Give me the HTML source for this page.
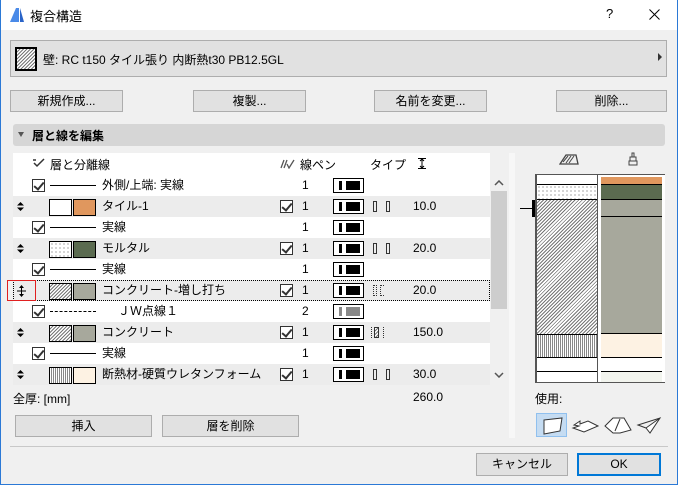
<!DOCTYPE html>
<html><head><meta charset="utf-8">
<style>
*{box-sizing:border-box;margin:0;padding:0}
body{width:678px;height:485px;overflow:hidden;background:#f0f0f0;font-family:"Liberation Sans","Noto Sans CJK JP",sans-serif;font-size:12px;color:#000;position:relative}
.a{position:absolute}
.btn{position:absolute;background:#e1e1e1;border:1px solid #adadad;text-align:center;line-height:20px;font-size:12px}
.row{position:absolute;left:13px;width:477px;height:21px}
.row.l{background:#ececec}
.row.w{background:#fff}
.cb{position:absolute;width:13px;height:13px;border:1px solid #333;background:#fff}
.cb:after{content:"";position:absolute;left:3px;top:0px;width:4px;height:8px;border:solid #333;border-width:0 2px 2px 0;transform:rotate(40deg)}
.t{position:absolute;top:3px;line-height:15px;white-space:nowrap}
.pen{position:absolute;left:320px;top:3px;width:31px;height:15px;border:1.5px solid #000;background:#fff}
.pen i{position:absolute;left:5px;top:2px;width:3px;height:9px;background:#000}
.pen b{position:absolute;left:12px;top:2px;width:14px;height:9px;background:#000}
.sw{position:absolute;top:3px;width:23px;height:17px;border:1px solid #000}
.ln{position:absolute;left:37px;top:10px;width:46px;height:0;border-top:1px solid #000}
.dr{position:absolute;left:4px;top:6px;width:7px;height:9px}
.ty{position:absolute;left:360px;top:5px;width:4px;height:11px;border:1px solid #333}
.hatch{background:repeating-linear-gradient(135deg,#fff 0 1.5px,#777 1.5px 2.5px)}
.dots{background-color:#fff;background-image:radial-gradient(#666 0.6px,transparent 0.8px);background-size:4px 4px}
.zig{background:repeating-linear-gradient(90deg,#fff 0 1px,#888 1px 2px)}
</style></head><body>
<div class="a" style="left:0;top:0;width:1px;height:485px;background:#2b79d6"></div>
<div class="a" style="right:0;top:0;width:1px;height:485px;background:#2b79d6"></div>
<div class="a" style="left:0;bottom:0;width:678px;height:1px;background:#2b79d6"></div>
<div class="a" style="left:1px;top:0;width:676px;height:30px;background:#fff"></div>
<svg class="a" style="left:9px;top:7px" width="16" height="16"><path d="M1 15 L7 1 L10 1 L10 15Z" fill="#4a8ae8"/><path d="M11 1 L15 15 L11 15Z" fill="#2a64c8"/></svg>
<div class="a" style="left:30px;top:6px;font-size:13px">複合構造</div>
<div class="a" style="left:606px;top:6px;font-size:13px">?</div>
<svg class="a" style="left:649px;top:9px" width="11" height="11"><path d="M0.5 0.5 L10.5 10.5 M10.5 0.5 L0.5 10.5" stroke="#000" stroke-width="1"/></svg>
<div class="a" style="left:10px;top:40px;width:657px;height:37px;background:#e1e1e1;border:1px solid #adadad"></div>
<div class="a hatch" style="left:15px;top:47px;width:22px;height:24px;border:2px solid #000"></div>
<div class="a" style="left:43px;top:51px;font-size:12px">壁: RC t150 タイル張り 内断熱t30 PB12.5GL</div>
<div class="a" style="left:658px;top:53px;width:0;height:0;border-left:4px solid #333;border-top:4px solid transparent;border-bottom:4px solid transparent"></div>
<div class="btn" style="left:10px;top:90px;width:113px;height:22px">新規作成...</div>
<div class="btn" style="left:193px;top:90px;width:113px;height:22px">複製...</div>
<div class="btn" style="left:374px;top:90px;width:113px;height:22px">名前を変更...</div>
<div class="btn" style="left:556px;top:90px;width:111px;height:22px">削除...</div>
<div class="a" style="left:13px;top:124px;width:652px;height:22px;background:#d6d6d6;border-radius:3px"></div>
<div class="a" style="left:18px;top:132px;width:0;height:0;border-top:5px solid #555;border-left:3.5px solid transparent;border-right:3.5px solid transparent"></div>
<div class="a" style="left:32px;top:127px;font-weight:bold">層と線を編集</div>
<div class="a" style="left:13px;top:153px;width:477px;height:22px;background:#fff"></div>
<svg class="a" style="left:32px;top:158px" width="14" height="10"><path d="M1 2 L4 2 M2 5 L5 8 L12 1" stroke="#333" stroke-width="1.5" fill="none"/></svg>
<div class="a" style="left:50px;top:156px">層と分離線</div>
<svg class="a" style="left:280px;top:159px" width="16" height="10"><path d="M1 9 L4 1 M4 9 L7 1 M7 5 L9 9 L14 1" stroke="#555" stroke-width="1.3" fill="none"/></svg>
<div class="a" style="left:300px;top:156px">線ペン</div>
<div class="a" style="left:370px;top:156px">タイプ</div>
<svg class="a" style="left:418px;top:158px" width="8" height="11"><path d="M0 0.5 H8 M0 10.5 H8 M4 1 V10 M2 3 L4 1 L6 3 M2 8 L4 10 L6 8" stroke="#000" fill="none"/></svg>
<div class="row w" style="top:175px"><div class="cb" style="left:19px;top:4px"></div><div class="ln"></div><div class="t" style="left:89px">外側/上端: 実線</div><div class="t" style="left:289px">1</div><div class="pen"><i></i><b></b></div></div>
<div class="row l" style="top:196px"><svg class="dr"><path d="M0 3.5 L3.5 0 L7 3.5Z M0 5.5 L3.5 9 L7 5.5Z" fill="#000"/></svg><div class="sw" style="left:36px;background:#fff"></div><div class="sw" style="left:60px;background:#e0975e"></div><div class="t" style="left:89px">タイル-1</div><div class="cb" style="left:267px;top:4px"></div><div class="t" style="left:289px">1</div><div class="pen"><i></i><b></b></div><div class="ty"></div><div class="ty" style="left:373px"></div><div class="t" style="left:400px">10.0</div></div>
<div class="row w" style="top:217px"><div class="cb" style="left:19px;top:4px"></div><div class="ln"></div><div class="t" style="left:89px">実線</div><div class="t" style="left:289px">1</div><div class="pen"><i></i><b></b></div></div>
<div class="row l" style="top:238px"><svg class="dr"><path d="M0 3.5 L3.5 0 L7 3.5Z M0 5.5 L3.5 9 L7 5.5Z" fill="#000"/></svg><div class="sw dots" style="left:36px"></div><div class="sw" style="left:60px;background:#5b6b50"></div><div class="t" style="left:89px">モルタル</div><div class="cb" style="left:267px;top:4px"></div><div class="t" style="left:289px">1</div><div class="pen"><i></i><b></b></div><div class="ty"></div><div class="ty" style="left:373px"></div><div class="t" style="left:400px">20.0</div></div>
<div class="row w" style="top:259px"><div class="cb" style="left:19px;top:4px"></div><div class="ln"></div><div class="t" style="left:89px">実線</div><div class="t" style="left:289px">1</div><div class="pen"><i></i><b></b></div></div>
<div class="row l" style="top:280px;border:1px dotted #000"><svg class="a" style="left:2px;top:3px" width="11" height="14"><path d="M3 4 L5.5 1 L8 4Z M3 10 L5.5 13 L8 10Z" fill="#000"/><path d="M5.5 3 V11 M1 7 H10" stroke="#000"/></svg><div class="sw hatch" style="left:35px;top:2px"></div><div class="sw" style="left:59px;top:2px;background:#a7a89c"></div><div class="t" style="left:88px;top:2px">コンクリート-増し打ち</div><div class="cb" style="left:266px;top:3px"></div><div class="t" style="left:288px;top:2px">1</div><div class="pen" style="left:319px;top:2px"><i></i><b></b></div><div class="ty" style="left:359px;top:4px;border-style:dotted"></div><div class="ty" style="left:366px;top:4px;border-style:dotted;border-right:none"></div><div class="t" style="left:399px;top:2px">20.0</div></div>
<div class="a" style="left:7px;top:280px;width:29px;height:21px;border:1.5px solid #e02020"></div>
<div class="row w" style="top:301px"><div class="cb" style="left:19px;top:4px"></div><div class="ln" style="border-top:1px dashed #000"></div><div class="t" style="left:105px">ＪＷ点線１</div><div class="t" style="left:289px">2</div><div class="pen"><i style="background:#888"></i><b style="background:#888"></b></div></div>
<div class="row l" style="top:322px"><svg class="dr"><path d="M0 3.5 L3.5 0 L7 3.5Z M0 5.5 L3.5 9 L7 5.5Z" fill="#000"/></svg><div class="sw hatch" style="left:36px"></div><div class="sw" style="left:60px;background:#a7a89c"></div><div class="t" style="left:89px">コンクリート</div><div class="cb" style="left:267px;top:4px"></div><div class="t" style="left:289px">1</div><div class="pen"><i></i><b></b></div><div class="a" style="left:358px;top:5px;width:1px;height:11px;border-left:1px dotted #333"></div><div class="ty hatch" style="left:361px;width:5px"></div><div class="a" style="left:370px;top:5px;width:1px;height:11px;border-left:1px dotted #333"></div><div class="t" style="left:400px">150.0</div></div>
<div class="row w" style="top:343px"><div class="cb" style="left:19px;top:4px"></div><div class="ln"></div><div class="t" style="left:89px">実線</div><div class="t" style="left:289px">1</div><div class="pen"><i></i><b></b></div></div>
<div class="row l" style="top:364px"><svg class="dr"><path d="M0 3.5 L3.5 0 L7 3.5Z M0 5.5 L3.5 9 L7 5.5Z" fill="#000"/></svg><div class="sw zig" style="left:36px"></div><div class="sw" style="left:60px;background:#fdf2e3"></div><div class="t" style="left:89px">断熱材-硬質ウレタンフォーム</div><div class="cb" style="left:267px;top:4px"></div><div class="t" style="left:289px">1</div><div class="pen"><i></i><b></b></div><div class="ty"></div><div class="ty" style="left:373px"></div><div class="t" style="left:400px">30.0</div></div>
<div class="a" style="left:490px;top:175px;width:17px;height:210px;background:#f0f0f0"></div>
<div class="a" style="left:491px;top:191px;width:16px;height:118px;background:#cdcdcd"></div>
<svg class="a" style="left:494px;top:180px" width="10" height="6"><path d="M1 5 L5 1 L9 5" stroke="#555" stroke-width="1.5" fill="none"/></svg>
<svg class="a" style="left:494px;top:372px" width="10" height="6"><path d="M1 1 L5 5 L9 1" stroke="#555" stroke-width="1.5" fill="none"/></svg>
<div class="a" style="left:509px;top:153px;width:6px;height:285px;background:#f7f7f7"></div>
<div class="a" style="left:13px;top:390px">全厚: [mm]</div>
<div class="a" style="left:413px;top:390px">260.0</div>
<div class="btn" style="left:15px;top:415px;width:137px;height:22px">挿入</div>
<div class="btn" style="left:162px;top:415px;width:137px;height:22px">層を削除</div>
<div class="a" style="left:10px;top:446px;width:658px;height:1px;background:#c8c8c8"></div>
<div class="btn" style="left:476px;top:453px;width:92px;height:23px">キャンセル</div>
<div class="btn" style="left:577px;top:453px;width:84px;height:23px;border:2px solid #0078d7;line-height:19px">OK</div>
<svg class="a" style="left:559px;top:153px" width="20" height="12"><path d="M1 11 L7 2 L17 2 L19 11Z" fill="none" stroke="#444" stroke-width="1.3"/><path d="M4 9 L9 3 M7 10 L12 3 M10 10 L15 3" stroke="#444"/></svg>
<svg class="a" style="left:627px;top:152px" width="12" height="14"><path d="M5 1 H7 V5 H5Z M3 5 H9 V9 H3Z M2 9 H10 V13 H2Z" fill="none" stroke="#444"/></svg>
<div class="a" style="left:535px;top:174px;width:130px;height:209px;background:#555"></div>
<div class="a" style="left:537px;top:175px;width:60px;height:207px;background:#fff"></div>
<div class="a dots" style="left:537px;top:184px;width:60px;height:16px;border-top:1px solid #000;border-bottom:1px solid #000"></div>
<div class="a hatch" style="left:537px;top:200px;width:60px;height:134px"></div>
<div class="a zig" style="left:537px;top:334px;width:60px;height:24px;border-top:1px solid #000;border-bottom:1px solid #000"></div>
<div class="a" style="left:537px;top:371px;width:60px;height:1px;background:#000"></div>
<div class="a" style="left:598px;top:175px;width:3px;height:207px;background:#fff"></div>
<div class="a" style="left:601px;top:175px;width:61px;height:207px;background:#fff"></div>
<div class="a" style="left:601px;top:177px;width:61px;height:8px;background:#e0975e;border-bottom:1px solid #000"></div>
<div class="a" style="left:601px;top:185px;width:61px;height:15px;background:#5b6b50;border-bottom:1px solid #000"></div>
<div class="a" style="left:601px;top:200px;width:61px;height:134px;background:#a7a89c;border-bottom:1px solid #000"></div>
<div class="a" style="left:601px;top:216px;width:61px;height:1px;background:#000"></div>
<div class="a" style="left:601px;top:334px;width:61px;height:24px;background:#fdf2e3;border-bottom:1px solid #000"></div>
<div class="a" style="left:601px;top:371px;width:61px;height:11px;background:#f2f4ee;border-top:1px solid #000"></div>
<div class="a" style="left:662px;top:175px;width:3px;height:207px;background:#fff"></div>
<div class="a" style="left:520px;top:208px;width:12px;height:1px;background:#000"></div>
<div class="a" style="left:532px;top:200px;width:3px;height:17px;background:#000"></div>
<div class="a" style="left:535px;top:390px">使用:</div>
<div class="a" style="left:536px;top:413px;width:31px;height:24px;background:#c5dcf2;border:1px solid #90c0ee"></div>
<svg class="a" style="left:536px;top:413px" width="130" height="24"><path d="M8 7 L26 5 L24 18 L8 21Z" fill="#fff" stroke="#333"/><path d="M38 12 L44 8 L44 11 L52 8 L62 13 L48 19 L37 15 L43 13Z" fill="#fff" stroke="#333"/><path d="M69 13 L77 5 L88 5 L95 17 L84 20 L77 20Z" fill="#fff" stroke="#333"/><path d="M84 6 L79 18" stroke="#333" fill="none"/><path d="M102 12 L124 5 L114 20 L110 15Z M102 12 L110 15 L124 5" fill="#fff" stroke="#333"/></svg>
</body></html>
